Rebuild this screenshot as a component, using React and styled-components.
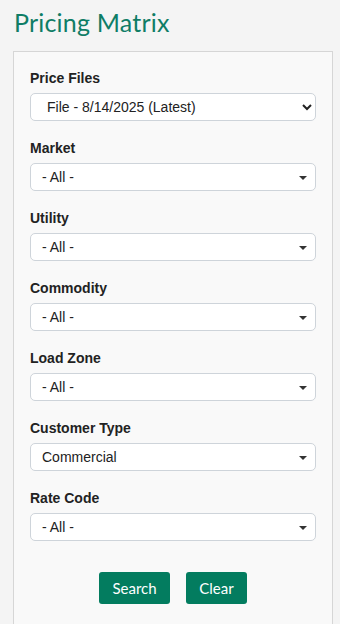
import React from 'react'
import styled, { createGlobalStyle } from 'styled-components'

const GlobalStyle = createGlobalStyle`
  html, body {
    margin: 0;
    padding: 0;
    background: #f4f4f4;
  }
  body {
    font-family: "Liberation Sans", Arial, sans-serif;
  }
`

const filters = [
  { label: 'Market', value: '- All -' },
  { label: 'Utility', value: '- All -' },
  { label: 'Commodity', value: '- All -' },
  { label: 'Load Zone', value: '- All -' },
  { label: 'Customer Type', value: 'Commercial' },
  { label: 'Rate Code', value: '- All -' },
]

const App = () => {
  return (
    <StPage>
      <GlobalStyle />
      <StTitle>Pricing Matrix</StTitle>
      <StCard>
        <StField>
          <StLabel>Price Files</StLabel>
          <StNativeSelect defaultValue="latest">
            <option value="latest">File - 8/14/2025 (Latest)</option>
          </StNativeSelect>
        </StField>
        {filters.map((f) => (
          <StField key={f.label}>
            <StLabel>{f.label}</StLabel>
            <StCombo>
              <span>{f.value}</span>
              <StCaret />
            </StCombo>
          </StField>
        ))}
        <StActions>
          <StButton type="button" $w={71}>Search</StButton>
          <StButton type="button" $w={61}>Clear</StButton>
        </StActions>
      </StCard>
    </StPage>
  )
}

export default App

const StPage = styled.div`
  padding: 6px 0 0 13px;
  height: 618px;
  overflow: hidden;
`

const StTitle = styled.h1`
  margin: 0 0 13px 1px;
  font-family: "Lato", "Open Sans", sans-serif;
  font-weight: 400;
  font-size: 25px;
  line-height: 32px;
  color: #0f7d66;
  letter-spacing: 0.2px;
`

const StCard = styled.div`
  width: 286px;
  border: 1px solid #d6d6d6;
  background: #f9f9f9;
  padding: 16px 16px 40px;
`

const StField = styled.div`
  display: flex;
  flex-direction: column;
  margin-bottom: 17px;
`

const StLabel = styled.label`
  font-size: 14px;
  font-weight: 700;
  line-height: 20px;
  color: #222;
  margin-bottom: 5px;
`

const StNativeSelect = styled.select`
  height: 28px;
  width: 100%;
  border: 1px solid #ced4da;
  border-radius: 5px;
  background: #fff;
  font-family: "Liberation Sans", Arial, sans-serif;
  font-size: 14px;
  color: #222;
  padding: 0 8px 0 12px;
`

const StCombo = styled.div`
  position: relative;
  display: flex;
  align-items: center;
  height: 28px;
  box-sizing: border-box;
  border: 1px solid #ced4da;
  border-radius: 5px;
  background: #fff;
  font-size: 14px;
  color: #222;
  padding: 0 24px 0 11px;
`

const StCaret = styled.span`
  position: absolute;
  right: 8px;
  top: 12px;
  width: 0;
  height: 0;
  border-left: 4px solid transparent;
  border-right: 4px solid transparent;
  border-top: 4px solid #333;
`

const StActions = styled.div`
  display: flex;
  justify-content: center;
  gap: 16px;
  margin-top: 31px;
`

const StButton = styled.button`
  width: ${(p) => p.$w}px;
  height: 32px;
  border: none;
  border-radius: 3px;
  background: #037c5f;
  color: #fff;
  font-family: "Lato", "Open Sans", sans-serif;
  font-size: 15px;
  cursor: pointer;
`
